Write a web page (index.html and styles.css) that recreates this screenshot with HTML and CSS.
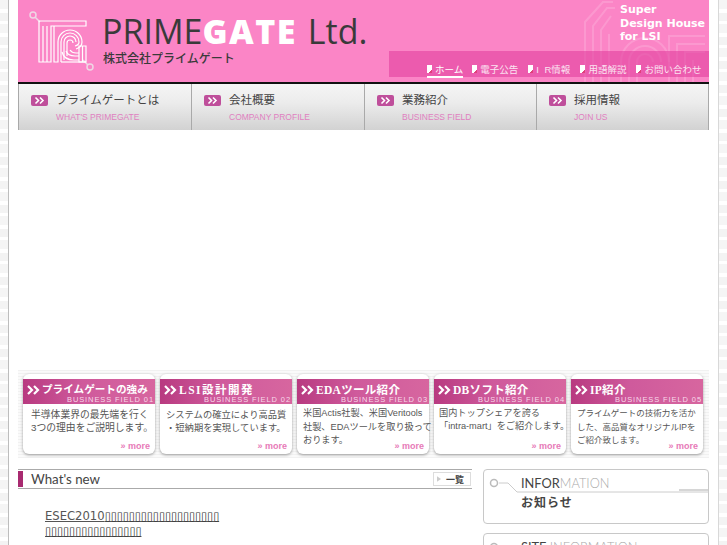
FILE: index.html
```html
<!DOCTYPE html>
<html lang="ja">
<head>
<meta charset="utf-8">
<title>PRIMEGATE Ltd.</title>
<link rel="stylesheet" href="styles.css">
</head>
<body>
<div class="page">
  <header class="header">
    <svg class="watermark" viewBox="0 0 130 84" aria-hidden="true">
      <g fill="none" stroke="#fff" stroke-opacity=".16" stroke-width="2">
        <path d="M6 84V22L24 2h10"/><path d="M14 84V26L28 8h8"/><path d="M22 84V30L32 16"/><path d="M30 84V34"/>
        <path d="M42 84V62a24 24 0 0 1 48 0"/><path d="M50 84V62a16 16 0 0 1 32 0"/><path d="M58 84V62a8 8 0 0 1 16 0"/>
        <path d="M90 84V36h36"/><path d="M98 84V44h28"/><path d="M106 84V52h20"/><path d="M114 84V60"/>
      </g>
    </svg>
    <div class="brand">
      <svg class="logo" viewBox="24 6 80 72" aria-hidden="true">
        <g fill="none" stroke="#efd6e5" stroke-width="1.5">
          <circle cx="33" cy="15" r="3"/><path d="M35 17l5 5"/>
          <circle cx="90" cy="67" r="3"/><path d="M88 65l-5-5"/>
        </g>
        <g fill="none" stroke="#fff" stroke-width="1.2">
          <path d="M39 21H86V26H51V62H39Z"/>
          <path d="M43 26V62M47 26V62"/>
          <path d="M54 26V62H58V42a12 12 0 0 1 24 0q0 5-6 7"/>
          <path d="M61 62V42a9 9 0 0 1 18 0q0 3-4 4"/>
          <path d="M64 60V42a6 6 0 0 1 12 0"/>
          <path d="M67 56V43a3 3 0 0 1 6 0"/>
          <path d="M62 52q2 8 12 8h5"/>
          <path d="M66 51q2 5 9 5h4"/>
          <path d="M70 50q2 3 6 3h3"/>
          <path d="M79 62V46h7V62Z"/><path d="M82.500 46V62"/>
          <path d="M61 62H86"/>
        </g>
      </svg>
      <div class="brand-text">
        <div class="brand-name">PRIME<b>GATE</b> Ltd.</div>
        <div class="brand-ja">株式会社プライムゲート</div>
      </div>
    </div>
    <div class="tagline">Super<br>Design House<br>for LSI</div>
    <nav class="subnav">
      <a class="subnav-item is-current"><i class="doc"></i>ホーム</a>
      <a class="subnav-item"><i class="doc"></i>電子公告</a>
      <a class="subnav-item subnav-item-ir"><i class="doc"></i>I R情報</a>
      <a class="subnav-item"><i class="doc"></i>用語解説</a>
      <a class="subnav-item"><i class="doc"></i>お問い合わせ</a>
    </nav>
  </header>

  <nav class="gnav">
    <a class="gnav-item">
      <span class="gnav-title"><svg class="badge" viewBox="0 0 17 11"><rect width="17" height="11" rx="2" fill="#bf4f9b"/><path d="M4.500 2.500l3 3-3 3M9 2.500l3 3-3 3" fill="none" stroke="#fff" stroke-width="1.6"/></svg>プライムゲートとは</span>
      <span class="gnav-sub">WHAT'S PRIMEGATE</span>
    </a>
    <a class="gnav-item">
      <span class="gnav-title"><svg class="badge" viewBox="0 0 17 11"><rect width="17" height="11" rx="2" fill="#bf4f9b"/><path d="M4.500 2.500l3 3-3 3M9 2.500l3 3-3 3" fill="none" stroke="#fff" stroke-width="1.6"/></svg>会社概要</span>
      <span class="gnav-sub">COMPANY PROFILE</span>
    </a>
    <a class="gnav-item">
      <span class="gnav-title"><svg class="badge" viewBox="0 0 17 11"><rect width="17" height="11" rx="2" fill="#bf4f9b"/><path d="M4.500 2.500l3 3-3 3M9 2.500l3 3-3 3" fill="none" stroke="#fff" stroke-width="1.6"/></svg>業務紹介</span>
      <span class="gnav-sub">BUSINESS FIELD</span>
    </a>
    <a class="gnav-item">
      <span class="gnav-title"><svg class="badge" viewBox="0 0 17 11"><rect width="17" height="11" rx="2" fill="#bf4f9b"/><path d="M4.500 2.500l3 3-3 3M9 2.500l3 3-3 3" fill="none" stroke="#fff" stroke-width="1.6"/></svg>採用情報</span>
      <span class="gnav-sub">JOIN US</span>
    </a>
  </nav>

  <div class="hero-space"></div>

  <section class="cards">
    <article class="card">
      <h3 class="card-head"><svg class="chev" viewBox="0 0 13 10"><path d="M1 1l4 4-4 4M7 1l4 4-4 4" fill="none" stroke="#fff" stroke-width="2.200"/></svg><span class="card-title card-title-long">プライムゲートの強み</span><span class="card-field">BUSINESS FIELD 01</span></h3>
      <p class="card-text">半導体業界の最先端を行く<br>3つの理由をご説明します。</p>
      <a class="more">» more</a>
    </article>
    <article class="card">
      <h3 class="card-head"><svg class="chev" viewBox="0 0 13 10"><path d="M1 1l4 4-4 4M7 1l4 4-4 4" fill="none" stroke="#fff" stroke-width="2.200"/></svg><span class="card-title card-title-wide">LSI設計開発</span><span class="card-field">BUSINESS FIELD 02</span></h3>
      <p class="card-text card-text-two">システムの確立により高品質<br>・短納期を実現しています。</p>
      <a class="more">» more</a>
    </article>
    <article class="card">
      <h3 class="card-head"><svg class="chev" viewBox="0 0 13 10"><path d="M1 1l4 4-4 4M7 1l4 4-4 4" fill="none" stroke="#fff" stroke-width="2.200"/></svg><span class="card-title">EDAツール紹介</span><span class="card-field">BUSINESS FIELD 03</span></h3>
      <p class="card-text card-text-three">米国Actis社製、米国Veritools<br>社製、EDAツールを取り扱って<br>おります。</p>
      <a class="more">» more</a>
    </article>
    <article class="card">
      <h3 class="card-head"><svg class="chev" viewBox="0 0 13 10"><path d="M1 1l4 4-4 4M7 1l4 4-4 4" fill="none" stroke="#fff" stroke-width="2.200"/></svg><span class="card-title">DBソフト紹介</span><span class="card-field">BUSINESS FIELD 04</span></h3>
      <p class="card-text card-text-four">国内トップシェアを誇る<br>「intra-mart」をご紹介します。</p>
      <a class="more">» more</a>
    </article>
    <article class="card">
      <h3 class="card-head"><svg class="chev" viewBox="0 0 13 10"><path d="M1 1l4 4-4 4M7 1l4 4-4 4" fill="none" stroke="#fff" stroke-width="2.200"/></svg><span class="card-title">IP紹介</span><span class="card-field">BUSINESS FIELD 05</span></h3>
      <p class="card-text card-text-five">プライムゲートの技術力を活か<br>した、高品質なオリジナルIPを<br>ご紹介致します。</p>
      <a class="more">» more</a>
    </article>
  </section>

  <div class="columns">
    <main class="news">
      <div class="news-bar">
        <h2 class="news-title">What's new</h2>
        <a class="news-all"><svg class="news-arrow" viewBox="0 0 5 7"><path d="M0 0l5 3.500L0 7z" fill="#ccc"/></svg>一覧</a>
      </div>
      <ul class="news-list">
        <li><a class="news-link">ESEC2010<span class="tofu">▯▯▯▯▯▯▯▯▯▯▯▯▯▯▯▯▯▯▯</span><br><span class="tofu">▯▯▯▯▯▯▯▯▯▯▯▯▯▯▯▯</span></a></li>
      </ul>
    </main>
    <aside class="side">
      <section class="panel">
        <svg class="panel-line" viewBox="0 0 226 26" aria-hidden="true">
          <circle cx="10" cy="13" r="3.500" fill="#fff" stroke="#bbb" stroke-width="1.500"/>
          <path d="M15 13h9l9 9h192" fill="none" stroke="#ccc"/>
          <path d="M195 20h29" stroke="#d6d6d6" stroke-width="2"/>
        </svg>
        <div class="panel-en">INFOR<span>MATION</span></div>
        <div class="panel-ja">お知らせ</div>
      </section>
      <section class="panel">
        <svg class="panel-line" viewBox="0 0 226 26" aria-hidden="true">
          <circle cx="10" cy="13" r="3.500" fill="#fff" stroke="#bbb" stroke-width="1.500"/>
        </svg>
        <div class="panel-en">SITE <span>INFORMATION</span></div>
      </section>
    </aside>
  </div>
</div>
</body>
</html>
```

FILE: styles.css
```css
html, body {
  margin: 0;
  height: 545px;
  overflow: hidden;
}
body {
  background: repeating-linear-gradient(180deg, #f5f5f5 0 9px, #fff 9px 13px, #f3f3f3 13px 21px, #fff 21px 24px);
  font-family: "Liberation Sans", "Noto Sans CJK JP", sans-serif;
  color: #555;
}
a { color: inherit; text-decoration: none; }
h2, h3, p, ul { margin: 0; padding: 0; }

.page {
  box-sizing: border-box;
  width: 711px;
  height: 545px;
  margin-left: 8px;
  padding: 0 9px;
  background: #fff;
  border-left: 1px solid #bdbdbd;
  border-right: 1px solid #d8d8d8;
  overflow: hidden;
}

/* header */
.header {
  position: relative;
  height: 82px;
  background: #fb85c6;
  border-bottom: 2px solid #111;
  overflow: hidden;
}
.watermark {
  position: absolute;
  right: 0;
  top: 0;
  width: 130px;
  height: 84px;
}
.brand {
  display: flex;
  align-items: flex-start;
  padding: 6px 0 0 6px;
}
.logo { width: 80px; height: 72px; flex: none; }
.brand-text { margin-left: -2px; padding-top: 6px; }
.brand-name {
  font-family: "Open Sans", sans-serif;
  font-size: 34px;
  line-height: 38px;
  word-spacing: 2px;
  color: #3a3a3a;
  white-space: nowrap;
}
.brand-name b { color: #fff; font-weight: 800; letter-spacing: 1.5px; }
.brand-ja {
  margin: 2px 0 0 1px;
  font-size: 12px;
  line-height: 14px;
  font-weight: 500;
  color: #3a3a3a;
}
.tagline {
  position: absolute;
  left: 602px;
  top: 3px;
  font-family: "DejaVu Sans", sans-serif;
  font-weight: 700;
  font-size: 11px;
  line-height: 13.5px;
  color: #fff;
  white-space: nowrap;
}
.subnav {
  position: absolute;
  left: 371px;
  right: 0;
  top: 51px;
  height: 26px;
  box-sizing: border-box;
  padding: 11px 0 0 38px;
  display: flex;
  background: rgba(226, 66, 160, .62);
}
.subnav-item {
  display: flex;
  align-items: center;
  height: 14px;
  margin-right: 10px;
  font-size: 9.5px;
  color: #fbe3f1;
  white-space: nowrap;
}
.subnav-item-ir { word-spacing: 3px; }
.subnav-item.is-current {
  margin-right: 9px;
  color: #fff;
  box-shadow: 0 2px 0 #fff;
}
.doc {
  width: 5px;
  height: 8px;
  margin-right: 3px;
  background: linear-gradient(135deg, #fff 72%, #e0407a 72%);
}

/* global nav */
.gnav {
  display: grid;
  grid-template-columns: 174px 173px 172px 172px;
  height: 46px;
}
.gnav-item {
  box-sizing: border-box;
  display: flex;
  flex-direction: column;
  padding: 9px 0 0 12px;
  background: linear-gradient(180deg, #f5f5f5 0, #ececec 40%, #d2d2d2 100%);
  border-right: 1px solid #a9a9a9;
}
.gnav-item:first-child { border-left: 1px solid #a9a9a9; }
.gnav-title {
  display: flex;
  align-items: center;
  font-size: 11.5px;
  line-height: 15px;
  color: #444;
  white-space: nowrap;
}
.badge { width: 17px; height: 11px; margin-right: 8px; flex: none; }
.gnav-sub {
  margin: 4px 0 0 25px;
  font-size: 8.5px;
  line-height: 10px;
  color: #e07fc0;
  white-space: nowrap;
}

.hero-space { height: 240px; }

/* cards */
.cards {
  display: flex;
  gap: 5px;
  height: 88px;
  box-sizing: border-box;
  padding: 4px 5px;
  background: repeating-linear-gradient(180deg, #f1f1f1 0 1px, #fafafa 1px 3px);
}
.card {
  position: relative;
  box-sizing: border-box;
  width: 132px;
  height: 80px;
  padding-top: 5px;
  background: #fff;
  border-radius: 6px;
  box-shadow: 0 1px 3px #999;
}
.card-head {
  position: relative;
  display: flex;
  align-items: flex-start;
  height: 25px;
  box-sizing: border-box;
  padding: 3px 0 0 4px;
  background: linear-gradient(90deg, #b83a80, #cf5a9c 45%, #d7669f);
  overflow: hidden;
  font-weight: 400;
}
.chev { width: 13px; height: 10px; margin: 3px 2px 0 0; flex: none; }
.card-title {
  font-family: "Liberation Serif", "Noto Sans CJK JP", serif;
  font-size: 11.5px;
  font-weight: 700;
  line-height: 16px;
  letter-spacing: .3px;
  color: #fff;
  white-space: nowrap;
}
.card-title-long { font-size: 10.6px; letter-spacing: 0; }
.card-title-wide { letter-spacing: 1.5px; }
.card-field {
  position: absolute;
  right: 1px;
  bottom: 0;
  font-size: 7.5px;
  line-height: 8px;
  letter-spacing: .9px;
  color: #f8d8ea;
  white-space: nowrap;
}
.card-text {
  padding: 5px 0 0 8px;
  font-size: 9.8px;
  line-height: 12.5px;
  color: #555;
  white-space: nowrap;
}
.card-text-two { padding-left: 6px; font-size: 9.3px; }
.card-text-three { padding: 3px 0 0 6px; font-size: 9.2px; line-height: 13.5px; }
.card-text-four { padding: 3px 0 0 5px; font-size: 9.2px; }
.card-text-five { padding: 3px 0 0 6px; font-size: 8.5px; line-height: 13.5px; }
.more {
  position: absolute;
  right: 5px;
  bottom: 3px;
  font-size: 9px;
  line-height: 10px;
  font-weight: 700;
  color: #e77ab8;
}

/* columns */
.columns {
  display: flex;
  justify-content: space-between;
  margin-top: 11px;
}
.news { width: 454px; }
.news-bar {
  display: flex;
  align-items: center;
  justify-content: space-between;
  box-sizing: border-box;
  height: 20px;
  padding-right: 1px;
  border-top: 1px solid #aaa;
  border-bottom: 1px solid #aaa;
}
.news-title {
  height: 16px;
  padding-left: 8px;
  border-left: 5px solid #a82a70;
  font-family: "Lato", sans-serif;
  font-size: 13.3px;
  line-height: 16px;
  font-weight: 400;
  color: #444;
}
.news-all {
  box-sizing: border-box;
  display: flex;
  align-items: center;
  width: 38px;
  height: 14px;
  padding-left: 3px;
  border: 1px solid #ddd;
  font-size: 9px;
  font-weight: 700;
  color: #444;
}
.news-arrow { width: 4px; height: 6px; margin-right: 5px; }
.news-list {
  list-style: none;
  padding: 20px 0 0 27px;
  font-family: "DejaVu Sans", sans-serif;
  font-size: 11.6px;
  line-height: 15px;
  color: #555;
}
.news-link { text-decoration: underline; }
.tofu {
  font-size: 11.5px;
  letter-spacing: -.3px;
  color: #333;
}

.side { width: 226px; display: flex; flex-direction: column; gap: 9px; }
.panel {
  position: relative;
  box-sizing: border-box;
  height: 55px;
  flex: none;
  padding: 5px 0 0 37px;
  background: #fff;
  border: 1px solid #c8c8c8;
  border-radius: 4px;
}
.panel-line {
  position: absolute;
  left: 0;
  top: 0;
  width: 226px;
  height: 26px;
}
.panel-en {
  position: relative;
  font-family: "Lato", sans-serif;
  font-size: 12.8px;
  line-height: 16px;
  color: #444;
  white-space: nowrap;
}
.panel-en span { color: #aaa; font-weight: 300; }
.panel-ja {
  margin-top: 4px;
  font-size: 12px;
  line-height: 16px;
  font-weight: 700;
  letter-spacing: 1px;
  color: #444;
}
```
